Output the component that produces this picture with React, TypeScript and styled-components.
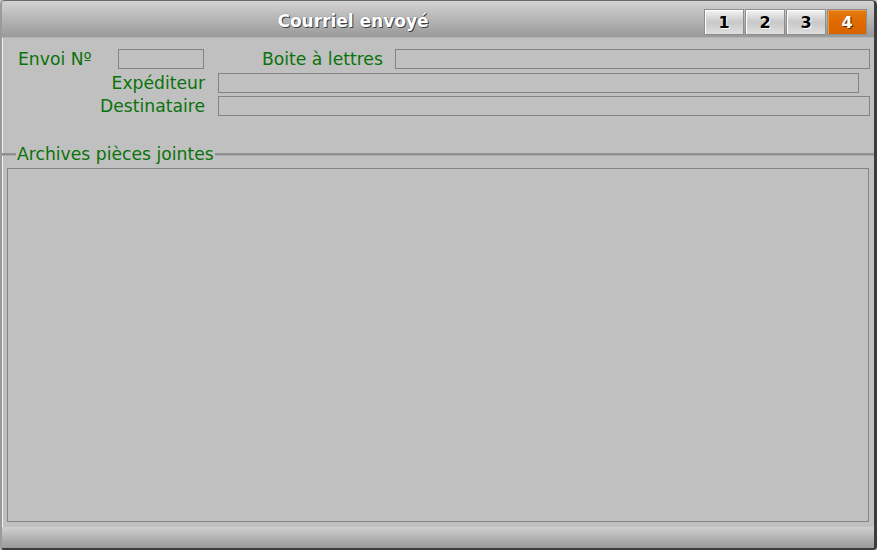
import styled, { createGlobalStyle } from 'styled-components';

const GlobalStyle = createGlobalStyle`
  html, body {
    margin: 0;
    padding: 0;
    background: #c0c0c0;
  }
  body {
    font-family: 'DejaVu Sans', Verdana, sans-serif;
  }
`;

const Window = styled.div`
  box-sizing: border-box;
  width: 877px;
  height: 550px;
  display: flex;
  flex-direction: column;
  background: #c0c0c0;
  border-style: solid;
  border-width: 1px 3px 2px 2px;
  border-color: #686868 #3c3c3c #3c3c3c #9a9a9a;
  border-radius: 5px 5px 4px 4px;
  box-shadow: inset 1px 0 0 #f2f2f2;
  overflow: hidden;
`;

const TitleBar = styled.div`
  height: 36px;
  flex: none;
  display: flex;
  align-items: center;
  background: linear-gradient(#d2d2d2, #a2a2a2 85%, #9a9a9a);
  border-bottom: 1px solid #b4b4b4;
`;

const Title = styled.div`
  flex: 1;
  text-align: center;
  padding-top: 3px;
  font-weight: bold;
  font-size: 17px;
  color: #ffffff;
  text-shadow: 1px 1px 0 #404040, 0 0 1px #606060;
`;

const Tabs = styled.div`
  display: flex;
  gap: 1px;
  margin-right: 7px;
  margin-top: 6px;
`;

const Tab = styled.div<{ $active?: boolean }>`
  box-sizing: border-box;
  width: 40px;
  height: 26px;
  display: flex;
  align-items: center;
  justify-content: center;
  border: 1px solid #8e8e8e;
  font-weight: bold;
  font-size: 16px;
  color: ${(p) => (p.$active ? '#ffffff' : '#000000')};
  text-shadow: ${(p) => (p.$active ? '1px 1px 0 #5a2a00' : '1px 1px 0 #ffffff')};
  background: ${(p) =>
    p.$active
      ? 'linear-gradient(#e27d10, #e06a00 50%, #d86400)'
      : 'linear-gradient(#f4f4f4, #c8c8c8 50%, #dedede)'};
  box-shadow: inset 1px 1px 0 ${(p) => (p.$active ? '#f09a40' : '#ffffff')};
`;

const Form = styled.div`
  padding-top: 11px;
  display: flex;
  flex-direction: column;
`;

const Row = styled.div<{ $gap?: number }>`
  display: flex;
  align-items: center;
  height: 20px;
  margin-bottom: ${(p) => p.$gap ?? 0}px;
`;

const Label = styled.div<{ $width?: number; $right?: boolean; $ml?: number }>`
  box-sizing: border-box;
  flex: none;
  width: ${(p) => (p.$width ? `${p.$width}px` : 'auto')};
  margin-left: ${(p) => p.$ml ?? 0}px;
  text-align: ${(p) => (p.$right ? 'right' : 'left')};
  font-size: 17.2px;
  color: #0a720a;
  white-space: nowrap;
`;

const Field = styled.div<{ $width?: number; $ml?: number; $mr?: number }>`
  box-sizing: border-box;
  height: 20px;
  flex: ${(p) => (p.$width ? 'none' : '1')};
  width: ${(p) => (p.$width ? `${p.$width}px` : 'auto')};
  margin-left: ${(p) => p.$ml ?? 0}px;
  margin-right: ${(p) => p.$mr ?? 0}px;
  border: 1px solid #848484;
  background: #c0c0c0;
`;

const GroupHeader = styled.div`
  margin-top: 29px;
  display: flex;
  align-items: center;
  height: 18px;
`;

const GroupLine = styled.div<{ $grow?: boolean }>`
  height: 2px;
  flex: ${(p) => (p.$grow ? '1' : 'none')};
  width: ${(p) => (p.$grow ? 'auto' : '14px')};
  background: #909090;
  border-bottom: 1px solid #a8a8a8;
  margin-top: 1px;
`;

const GroupLabel = styled.div`
  font-size: 17.2px;
  color: #0a720a;
  padding: 0 1px;
  white-space: nowrap;
`;

const ListBox = styled.div`
  flex: 1;
  margin: 5px;
  border: 1px solid #848484;
  background: #c0c0c0;
`;

const BottomBar = styled.div`
  height: 21px;
  flex: none;
  background: linear-gradient(#d0d0d0, #b4b4b4 50%, #9a9a9a);
`;

const Body = styled.div`
  flex: 1;
  display: flex;
  flex-direction: column;
`;

export default function App() {
  return (
    <>
      <GlobalStyle />
      <Window>
        <TitleBar>
          <Title>Courriel envoyé</Title>
          <Tabs>
            <Tab>1</Tab>
            <Tab>2</Tab>
            <Tab>3</Tab>
            <Tab $active>4</Tab>
          </Tabs>
        </TitleBar>
        <Body>
          <Form>
            <Row $gap={4}>
              <Label $width={100} $ml={16}>
                Envoi Nº
              </Label>
              <Field $width={86} />
              <Label $ml={58}>Boite à lettres</Label>
              <Field $ml={12} $mr={4} />
            </Row>
            <Row $gap={3}>
              <Label $width={203} $right>
                Expéditeur
              </Label>
              <Field $ml={13} $mr={15} />
            </Row>
            <Row>
              <Label $width={203} $right>
                Destinataire
              </Label>
              <Field $ml={13} $mr={4} />
            </Row>
          </Form>
          <GroupHeader>
            <GroupLine />
            <GroupLabel>Archives pièces jointes</GroupLabel>
            <GroupLine $grow />
          </GroupHeader>
          <ListBox />
        </Body>
        <BottomBar />
      </Window>
    </>
  );
}
